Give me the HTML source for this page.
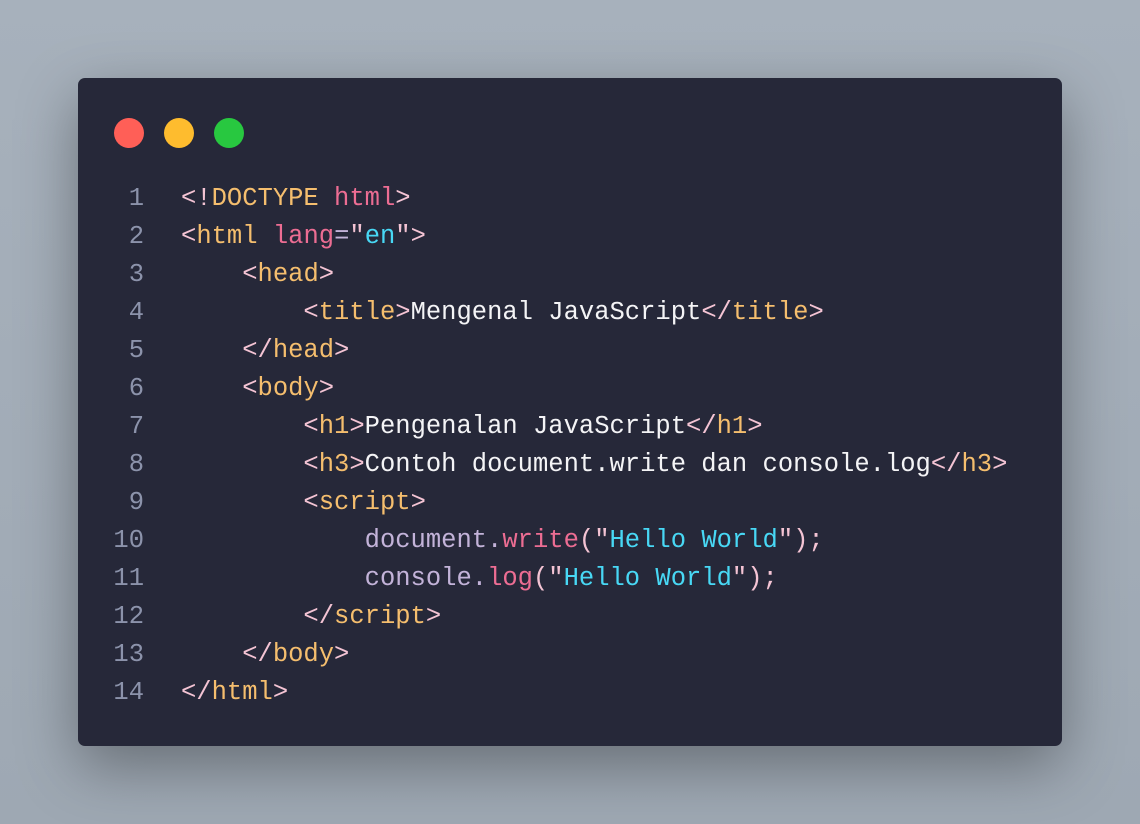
<!DOCTYPE html>
<html><head><style>
body{margin:0;width:1140px;height:824px;background:linear-gradient(180deg,#a7b1bc,#9ea8b3);position:relative;overflow:hidden}
.card{position:absolute;left:78px;top:78px;width:984px;height:668px;background:#262839;border-radius:7px;box-shadow:0 20px 60px rgba(0,0,0,.35)}
.dot{position:absolute;top:40px;width:30px;height:30px;border-radius:50%}
.code{position:absolute;left:0;top:102px;font-family:"Liberation Mono",monospace;font-size:25.5px;line-height:38px;color:#fff;white-space:pre}
.ln{display:inline-block;width:66px;text-align:right;color:#8c93ab;margin-right:37px}
.p{color:#f4c4d4}.t{color:#f5be6e}.r{color:#ec6d93}.c{color:#48d8f5}.v{color:#c3b3d9}.w{color:#f4f4f6}
</style></head><body>
<div class="card">
<div class="dot" style="left:36px;background:#ff5f57"></div>
<div class="dot" style="left:86px;background:#febc2e"></div>
<div class="dot" style="left:136px;background:#28c840"></div>
<div class="code"><span class="ln">1</span><span class="p">&lt;!</span><span class="t">DOCTYPE</span> <span class="r">html</span><span class="p">&gt;</span>
<span class="ln">2</span><span class="p">&lt;</span><span class="t">html</span> <span class="r">lang</span><span class="v">=</span><span class="p">"</span><span class="c">en</span><span class="p">"&gt;</span>
<span class="ln">3</span>    <span class="p">&lt;</span><span class="t">head</span><span class="p">&gt;</span>
<span class="ln">4</span>        <span class="p">&lt;</span><span class="t">title</span><span class="p">&gt;</span><span class="w">Mengenal JavaScript</span><span class="p">&lt;/</span><span class="t">title</span><span class="p">&gt;</span>
<span class="ln">5</span>    <span class="p">&lt;/</span><span class="t">head</span><span class="p">&gt;</span>
<span class="ln">6</span>    <span class="p">&lt;</span><span class="t">body</span><span class="p">&gt;</span>
<span class="ln">7</span>        <span class="p">&lt;</span><span class="t">h1</span><span class="p">&gt;</span><span class="w">Pengenalan JavaScript</span><span class="p">&lt;/</span><span class="t">h1</span><span class="p">&gt;</span>
<span class="ln">8</span>        <span class="p">&lt;</span><span class="t">h3</span><span class="p">&gt;</span><span class="w">Contoh document.write dan console.log</span><span class="p">&lt;/</span><span class="t">h3</span><span class="p">&gt;</span>
<span class="ln">9</span>        <span class="p">&lt;</span><span class="t">script</span><span class="p">&gt;</span>
<span class="ln">10</span>            <span class="v">document.</span><span class="r">write</span><span class="p">("</span><span class="c">Hello World</span><span class="p">");</span>
<span class="ln">11</span>            <span class="v">console.</span><span class="r">log</span><span class="p">("</span><span class="c">Hello World</span><span class="p">");</span>
<span class="ln">12</span>        <span class="p">&lt;/</span><span class="t">script</span><span class="p">&gt;</span>
<span class="ln">13</span>    <span class="p">&lt;/</span><span class="t">body</span><span class="p">&gt;</span>
<span class="ln">14</span><span class="p">&lt;/</span><span class="t">html</span><span class="p">&gt;</span></div>
</div>
</body></html>
